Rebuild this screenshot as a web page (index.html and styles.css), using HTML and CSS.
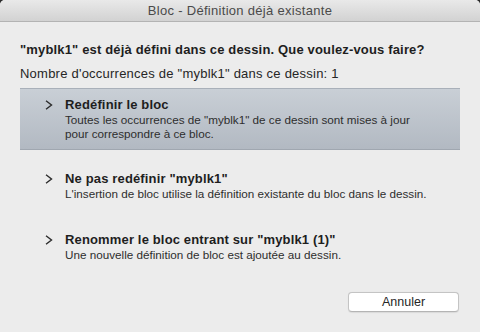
FILE: index.html
```html
<!DOCTYPE html>
<html lang="fr">
<head>
<meta charset="utf-8">
<title>Bloc - Définition déjà existante</title>
<link rel="stylesheet" href="styles.css">
</head>
<body>
<div class="window">
  <div class="titlebar">Bloc - Définition déjà existante</div>
  <div class="content">
    <h1 class="heading">"myblk1" est déjà défini dans ce dessin. Que voulez-vous faire?</h1>
    <p class="count">Nombre d'occurrences de "myblk1" dans ce dessin: 1</p>
    <div class="options">
      <div class="option selected">
        <svg class="chev" width="8" height="10" viewBox="0 0 8 10"><polyline points="1,0.8 6.5,5 1,9.2" fill="none" stroke="#2b2b2b" stroke-width="1.4"/></svg>
        <div class="otext">
          <div class="otitle">Redéfinir le bloc</div>
          <div class="odesc">Toutes les occurrences de "myblk1" de ce dessin sont mises à jour<br>pour correspondre à ce bloc.</div>
        </div>
      </div>
      <div class="option">
        <svg class="chev" width="8" height="10" viewBox="0 0 8 10"><polyline points="1,0.8 6.5,5 1,9.2" fill="none" stroke="#2b2b2b" stroke-width="1.4"/></svg>
        <div class="otext">
          <div class="otitle">Ne pas redéfinir "myblk1"</div>
          <div class="odesc">L'insertion de bloc utilise la définition existante du bloc dans le dessin.</div>
        </div>
      </div>
      <div class="option">
        <svg class="chev" width="8" height="10" viewBox="0 0 8 10"><polyline points="1,0.8 6.5,5 1,9.2" fill="none" stroke="#2b2b2b" stroke-width="1.4"/></svg>
        <div class="otext">
          <div class="otitle">Renommer le bloc entrant sur "myblk1 (1)"</div>
          <div class="odesc">Une nouvelle définition de bloc est ajoutée au dessin.</div>
        </div>
      </div>
    </div>
    <div class="footer">
      <button class="btn">Annuler</button>
    </div>
  </div>
</div>
</body>
</html>
```
FILE: styles.css
```css
* { box-sizing: border-box; }
html, body { margin: 0; padding: 0; background: #2a2a2a; }
body {
  font-family: "Liberation Sans", Arial, sans-serif;
  width: 480px;
  height: 332px;
  overflow: hidden;
}
.window {
  width: 480px;
  height: 332px;
  background: #ececec;
  border-radius: 5px 5px 0 0;
  overflow: hidden;
  display: flex;
  flex-direction: column;
}
.titlebar {
  height: 22px;
  flex: none;
  background: linear-gradient(#e9e9e9, #d2d2d2);
  border-bottom: 1px solid #b3b3b3;
  color: #4a4a4a;
  font-size: 13px;
  letter-spacing: 0.3px;
  line-height: 21px;
  text-align: center;
}
.content {
  padding: 0 20px;
  display: flex;
  flex-direction: column;
  flex: 1;
}
.heading {
  margin: 20px 0 0;
  font-size: 13px;
  font-weight: bold;
  letter-spacing: 0.16px;
  line-height: 16px;
  color: #1e1e1e;
}
.count {
  margin: 8px 0 0;
  font-size: 13px;
  letter-spacing: 0.23px;
  line-height: 16px;
  color: #262626;
}
.options {
  margin-top: 6px;
  display: flex;
  flex-direction: column;
  gap: 12px;
}
.option {
  display: flex;
  align-items: flex-start;
  padding: 8px 0 9px 25px;
  border-top: 1px solid transparent;
  border-bottom: 1px solid transparent;
}
.option.selected {
  background: linear-gradient(#c9cfd6, #b2b9c2);
  border-top-color: #a9b0b9;
  border-bottom-color: #a0a7b0;
}
.chev {
  flex: none;
  margin-top: 3px;
  margin-right: 12px;
}
.otitle {
  font-size: 13px;
  font-weight: bold;
  letter-spacing: 0.15px;
  line-height: 16px;
  color: #1e1e1e;
}
.odesc {
  font-size: 11.7px;
  line-height: 13.5px;
  color: #2e2e2e;
}
.footer {
  margin-top: auto;
  padding-bottom: 20px;
  display: flex;
  justify-content: flex-end;
}
.btn {
  width: 111px;
  height: 20px;
  margin-right: 1px;
  background: #ffffff;
  border: 1px solid #c4c4c4;
  border-bottom-color: #b4b4b4;
  border-radius: 4px;
  box-shadow: 0 0.5px 1px rgba(0,0,0,0.08);
  font-family: "Liberation Sans", Arial, sans-serif;
  font-size: 12.5px;
  color: #262626;
  padding: 0;
  line-height: 18px;
}
```
